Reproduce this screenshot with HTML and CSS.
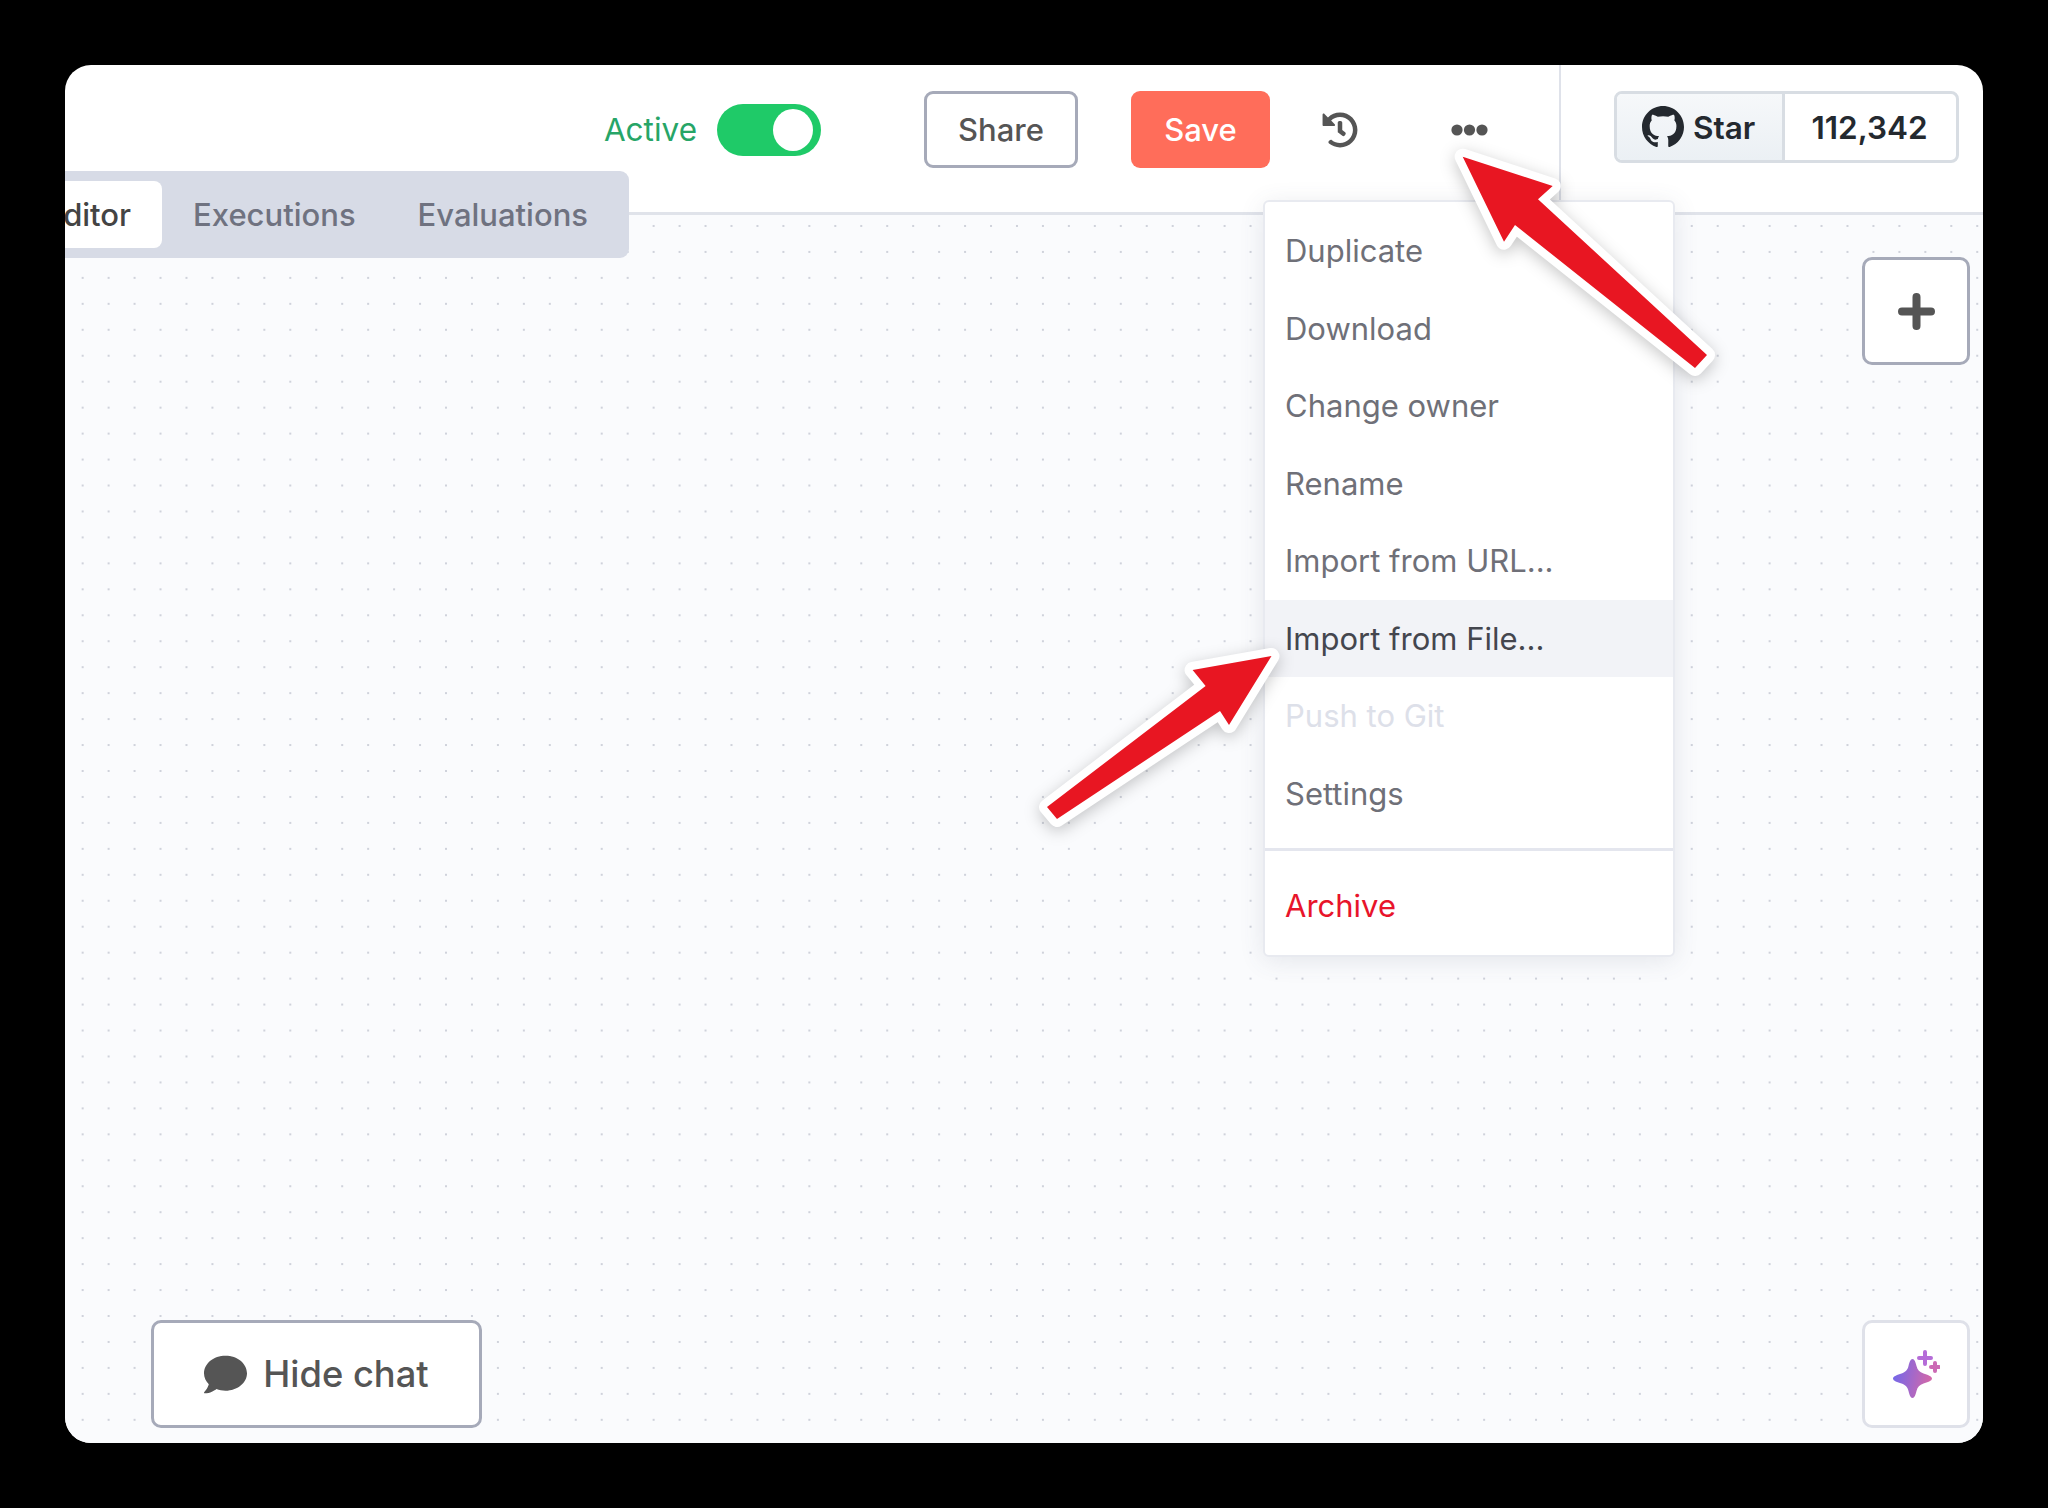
FILE: index.html
```html
<!DOCTYPE html>
<html lang="en">
<head>
  <meta charset="UTF-8" />
  <meta name="viewport" content="width=device-width, initial-scale=1.0"/>
  <title>Workflow editor</title>
  <link rel="stylesheet" href="styles.css">
</head>
<body>
  <div class="frame">
    <header class="topbar">
      <div class="actions">
        <span class="active-label">Active</span>
        <span class="toggle"><span class="knob"></span></span>
        <button class="btn btn-share">Share</button>
        <button class="btn btn-save">Save</button>
        <svg class="icon-history" viewBox="0 0 512 512"><path d="M504 255.531c.253 136.64-111.18 248.372-247.82 248.468-59.015.042-113.223-20.53-155.822-54.911-11.077-8.94-11.905-25.541-1.839-35.607l11.267-11.267c8.609-8.609 22.353-9.551 31.891-1.984C173.062 425.135 212.781 440 256 440c101.705 0 184-82.311 184-184 0-101.705-82.311-184-184-184-48.814 0-93.149 18.969-126.068 49.932l50.754 50.754c10.08 10.08 2.941 27.314-11.313 27.314H24c-8.837 0-16-7.163-16-16V38.627c0-14.254 17.234-21.393 27.314-11.314l49.372 49.372C129.209 34.136 189.552 8 256 8c136.81 0 247.747 110.78 248 247.531zm-180.912 78.784l9.823-12.63c8.138-10.463 6.253-25.542-4.21-33.679L288 256.349V152c0-13.255-10.745-24-24-24h-16c-13.255 0-24 10.745-24 24v135.651l65.409 50.874c10.463 8.137 25.541 6.253 33.679-4.21z"/></svg>
        <svg class="icon-dots" viewBox="0 0 37 12"><circle cx="6" cy="6" r="5.6"/><circle cx="18.5" cy="6" r="5.6"/><circle cx="31" cy="6" r="5.6"/></svg>
      </div>
      <div class="github-wrap">
        <div class="github">
          <span class="gh-star">
            <svg class="icon-github" viewBox="0 0 16 16"><path d="M8 0C3.58 0 0 3.58 0 8c0 3.54 2.29 6.53 5.47 7.59.4.07.55-.17.55-.38 0-.19-.01-.82-.01-1.49-2.01.37-2.53-.49-2.69-.94-.09-.23-.48-.94-.82-1.13-.28-.15-.68-.52-.01-.53.63-.01 1.08.58 1.23.82.72 1.21 1.87.87 2.33.66.07-.52.28-.87.51-1.07-1.78-.2-3.64-.89-3.64-3.95 0-.87.31-1.59.82-2.15-.08-.2-.36-1.02.08-2.12 0 0 .67-.21 2.2.82.64-.18 1.32-.27 2-.27.68 0 1.36.09 2 .27 1.53-1.04 2.2-.82 2.2-.82.44 1.1.16 1.92.08 2.12.51.56.82 1.27.82 2.15 0 3.07-1.87 3.75-3.65 3.95.29.25.54.73.54 1.48 0 1.07-.01 1.93-.01 2.2 0 .21.15.46.55.38A8.013 8.013 0 0016 8c0-4.42-3.58-8-8-8z"/></svg>
            Star
          </span>
          <span class="gh-count">112,342</span>
        </div>
      </div>
    </header>

    <nav class="tabs">
      <span class="tab tab-active">Editor</span>
      <span class="tab">Executions</span>
      <span class="tab">Evaluations</span>
    </nav>

    <main class="canvas">
      <div class="canvas-top">
        <button class="square-btn">
          <svg class="icon-plus" viewBox="0 0 37 37"><path d="M18.5 4v29M4 18.5h29"/></svg>
        </button>
      </div>
      <div class="canvas-bottom">
        <button class="chat-btn">
          <svg class="icon-chat" viewBox="0 0 512 512"><path d="M256 32C114.6 32 0 125.1 0 240c0 49.6 21.4 95 57 130.7C44.5 421.1 2.7 466 2.2 466.5c-2.2 2.3-2.8 5.7-1.5 8.7S4.8 480 8 480c66.3 0 116-31.8 140.6-51.4 32.7 12.3 69 19.4 107.4 19.4 141.4 0 256-93.1 256-208S397.4 32 256 32z"/></svg>
          Hide chat
        </button>
        <button class="square-btn square-light">
          <svg class="icon-sparkle" viewBox="0 0 48 48">
            <defs>
              <linearGradient id="sparkleFill" x1="0" y1="0.4" x2="1" y2="0.6">
                <stop offset="0" stop-color="#7468ea"/>
                <stop offset="1" stop-color="#d768a6"/>
              </linearGradient>
            </defs>
            <path fill="url(#sparkleFill)" d="M20.500 9c2 0 3 3 4 7 1 4 3 6 7 7.500 4 1.500 8.500 2.500 8.500 5s-4.500 3.500-8.500 5c-4 1.500-6 3.500-7 7.500-1 4-2 7-4 7s-3-3-4-7c-1-4-3-6-7-7.500-4-1.500-8.500-2.500-8.500-5s4.500-3.500 8.500-5c4-1.500 6-3.500 7-7.500 1-4 2-7 4-7z"/>
            <path class="spark" stroke="#b56cd8" d="M33 2v12M27 8h12"/>
            <path class="spark" stroke="#cc6ab4" d="M43 13v8M39 17h8"/>
          </svg>
        </button>
      </div>
    </main>

    <div class="menu">
      <div class="menu-item">Duplicate</div>
      <div class="menu-item">Download</div>
      <div class="menu-item">Change owner</div>
      <div class="menu-item">Rename</div>
      <div class="menu-item">Import from URL...</div>
      <div class="menu-item menu-hover">Import from File...</div>
      <div class="menu-item menu-disabled">Push to Git</div>
      <div class="menu-item">Settings</div>
      <div class="menu-sep"></div>
      <div class="menu-item menu-danger">Archive</div>
    </div>

    <svg class="arrows" viewBox="65 65 1918 1378">
      <polygon points="1462.700,156.700 1552.700,186 1538,199.300 1707,355 1695,368 1515,225 1504,241.700"/>
      <polygon points="1271.500,656 1192.600,670 1205.600,686 1047,807 1057,819 1220,711 1229,725"/>
    </svg>
  </div>
</body>
</html>
```

FILE: styles.css
```css
* { box-sizing: border-box; }

body {
  margin: 0;
  height: 1508px;
  padding: 65px;
  background: #000;
  font-family: Inter, "Liberation Sans", sans-serif;
}

button { font-family: inherit; cursor: pointer; }

.frame {
  position: relative;
  display: flex;
  flex-direction: column;
  height: 1378px;
  background: #fff;
  border-radius: 26px;
  overflow: hidden;
}

/* top bar */
.topbar {
  display: flex;
  justify-content: flex-end;
  flex: none;
  height: 150px;
  border-bottom: 3px solid #e0e3ea;
}
.actions {
  display: flex;
  align-items: center;
  height: 77px;
  margin-top: 26px;
}
.active-label {
  font-size: 31.500px;
  color: #27a567;
  margin-right: 20px;
}
.toggle {
  display: flex;
  justify-content: flex-end;
  align-items: center;
  width: 104px;
  height: 52px;
  padding-right: 8px;
  border-radius: 26px;
  background: #1fca68;
  margin-right: 103px;
}
.knob {
  width: 40px;
  height: 42px;
  border-radius: 50%;
  background: #fff;
}
.btn {
  height: 77px;
  font-size: 31px;
  font-weight: 500;
  border-radius: 9px;
}
.btn-share {
  width: 154px;
  background: #fff;
  border: 3px solid #a6aab9;
  color: #555;
  margin-right: 53px;
}
.btn-save {
  width: 139px;
  background: #ff6d5a;
  border: none;
  color: #fff;
  margin-right: 52px;
}
.icon-history {
  width: 36px;
  height: 36px;
  fill: #555;
  margin-right: 93px;
}
.icon-dots {
  width: 37px;
  height: 12px;
  fill: #555;
  margin-right: 71px;
}
.github-wrap {
  border-left: 2px solid #dfe2ea;
  padding: 26px 24px 0 53px;
}
.github {
  display: flex;
  width: 345px;
  height: 72px;
  border: 3px solid #d8dde3;
  border-radius: 8px;
  color: #24292f;
  font-size: 31.500px;
  font-weight: 600;
  overflow: hidden;
}
.gh-star {
  display: flex;
  align-items: center;
  gap: 9px;
  width: 168px;
  padding-left: 25px;
  background: linear-gradient(#f6f8fa, #ebf0f4);
  border-right: 3px solid #d8dde3;
}
.gh-count {
  flex: 1;
  display: flex;
  align-items: center;
  justify-content: center;
  padding-right: 2px;
}
.icon-github {
  width: 42px;
  height: 42px;
  fill: #24292f;
}

/* tabs sit over the header line */
.tabs {
  position: absolute;
  top: 106px;
  right: 1354px;
  display: flex;
  height: 87px;
  padding: 10px;
  background: #d7dbe6;
  border-radius: 9px;
}
.tab {
  display: flex;
  align-items: center;
  padding: 0 31px;
  font-size: 31px;
  font-weight: 500;
  color: #6f7280;
  border-radius: 8px;
}
.tab-active {
  background: #fff;
  color: #444;
}

/* canvas */
.canvas {
  flex: 1;
  display: flex;
  flex-direction: column;
  justify-content: space-between;
  padding: 42px 13px 15px 86px;
  background-color: #fafbfd;
  background-image: radial-gradient(circle, #cfd2db 0.8px, transparent 1.2px);
  background-size: 25.96px 25.96px;
  background-position: 4.700px -2px;
}
.canvas-top { display: flex; justify-content: flex-end; }
.canvas-bottom {
  display: flex;
  justify-content: space-between;
  align-items: flex-end;
}
.square-btn {
  display: flex;
  align-items: center;
  justify-content: center;
  width: 108px;
  height: 108px;
  padding: 0;
  background: #fff;
  border: 3px solid #a6aab9;
  border-radius: 10px;
}
.square-light { border-color: #dfe1e9; }
.icon-plus {
  width: 37px;
  height: 37px;
  fill: none;
  stroke: #555;
  stroke-width: 8;
  stroke-linecap: round;
}
.icon-sparkle {
  width: 48px;
  height: 48px;
}
.spark {
  fill: none;
  stroke-width: 4;
  stroke-linecap: round;
}
.chat-btn {
  display: flex;
  align-items: center;
  justify-content: center;
  gap: 16px;
  width: 331px;
  height: 108px;
  padding: 0;
  background: #fff;
  border: 3px solid #a6aab9;
  border-radius: 10px;
  color: #555;
  font-size: 36.300px;
  font-weight: 500;
}
.icon-chat {
  width: 43px;
  height: 43px;
  fill: #555;
}

/* dropdown */
.menu {
  position: absolute;
  top: 135px;
  right: 308px;
  width: 412px;
  padding: 10px 0;
  background: #fff;
  border: 2px solid #e8eaf0;
  border-radius: 6px;
  box-shadow: 0 4px 24px rgba(70, 80, 110, 0.12);
}
.menu-item {
  display: flex;
  align-items: center;
  height: 77.5px;
  padding-left: 20px;
  font-size: 31px;
  color: #6f7078;
}
.menu-hover {
  background: #f2f3f7;
  color: #44464e;
}
.menu-disabled { color: #dde0e9; }
.menu-danger { color: #e8142b; }
.menu-sep {
  height: 3px;
  margin: 16px 0;
  background: #e4e6ee;
}

/* annotation arrows */
.arrows {
  position: absolute;
  top: 0;
  left: 0;
  width: 100%;
  height: 100%;
  pointer-events: none;
  filter: drop-shadow(0 4px 8px rgba(0, 0, 0, 0.22));
}
.arrows polygon {
  fill: #e81622;
  stroke: #fff;
  stroke-width: 16;
  stroke-linejoin: round;
  paint-order: stroke;
}
```
